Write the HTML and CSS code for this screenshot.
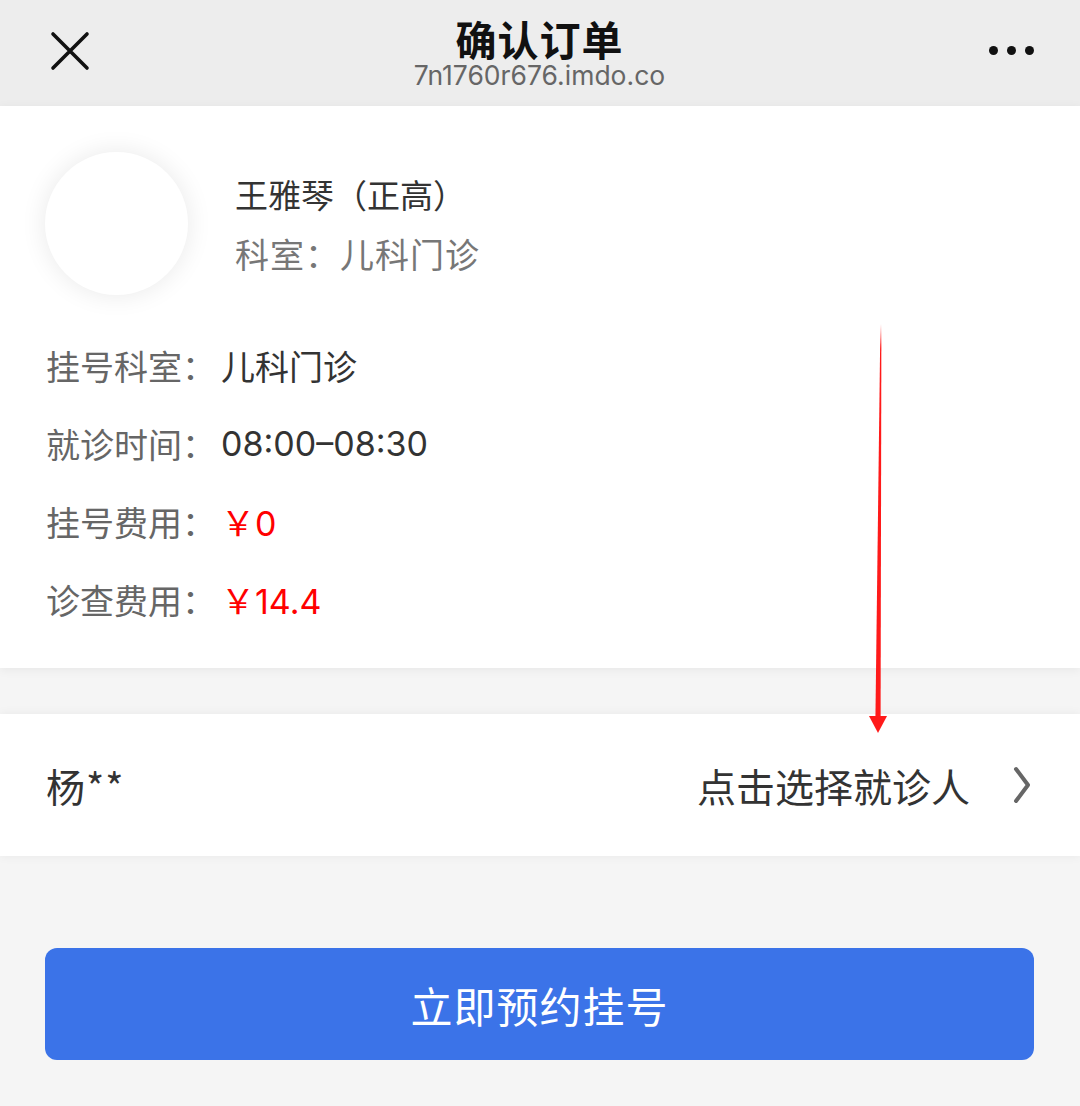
FILE: index.html
```html
<!DOCTYPE html>
<html lang="zh-CN">
<head>
<meta charset="utf-8">
<title>确认订单</title>
<link rel="stylesheet" href="styles.css">
</head>
<body>
<div class="page">
  <header class="topbar">
    <div class="close">
      <svg width="40" height="40" viewBox="0 0 40 40"><path d="M3 3 L37 37 M37 3 L3 37" stroke="#111" stroke-width="3.6" stroke-linecap="round" fill="none"/></svg>
    </div>
    <div class="titles">
      <div class="title">确认订单</div>
      <div class="subtitle">7n1760r676.imdo.co</div>
    </div>
    <div class="more">
      <span class="dot"></span><span class="dot"></span><span class="dot"></span>
    </div>
  </header>

  <section class="card">
    <div class="doctor">
      <div class="avatar"></div>
      <div class="doc-info">
        <div class="doc-name">王雅琴（正高）</div>
        <div class="doc-dept">科室：儿科门诊</div>
      </div>
    </div>
    <div class="rows">
      <div class="row"><span class="label">挂号科室：</span><span class="value">儿科门诊</span></div>
      <div class="row"><span class="label">就诊时间：</span><span class="value num">08:00–08:30</span></div>
      <div class="row"><span class="label">挂号费用：</span><span class="value red">￥<span class="num">0</span></span></div>
      <div class="row"><span class="label">诊查费用：</span><span class="value red">￥<span class="num">14.4</span></span></div>
    </div>
  </section>

  <section class="patient">
    <span class="pname">杨**</span>
    <span class="pick">点击选择就诊人
      <svg class="chev" width="20" height="38" viewBox="0 0 20 38"><path d="M4 3 L16 19 L4 35" stroke="#666" stroke-width="4" stroke-linecap="round" stroke-linejoin="round" fill="none"/></svg>
    </span>
  </section>

  <div class="action">
    <button class="btn">立即预约挂号</button>
  </div>

  <svg class="arrow" width="40" height="420" viewBox="0 0 40 420">
    <defs>
      <linearGradient id="fade" x1="0" y1="0" x2="0" y2="1">
        <stop offset="0" stop-color="#ff1a1a" stop-opacity="0"/>
        <stop offset="0.06" stop-color="#ff1a1a" stop-opacity="1"/>
        <stop offset="1" stop-color="#ff1a1a" stop-opacity="1"/>
      </linearGradient>
    </defs>
    <polygon points="20.4,0 21.4,0 20.6,396 15.4,396" fill="url(#fade)"/>
    <polygon points="9,392 27,392 18,409" fill="#ff1a1a"/>
  </svg>
</div>
</body>
</html>
```

FILE: styles.css
```css
* { box-sizing: border-box; }
html, body { margin: 0; padding: 0; }
body {
  background: #f5f5f5;
  font-family: "Noto Sans CJK SC", "Noto Sans", sans-serif;
  color: #333;
}
.page {
  position: relative;
  width: 1080px;
  height: 1106px;
  overflow: hidden;
  background: #f5f5f5;
}
.topbar {
  height: 106px;
  background: #ededed;
  display: flex;
  align-items: flex-start;
  justify-content: space-between;
  padding: 0 46px 0 50px;
}
.close { margin-top: 31px; width: 40px; height: 40px; }
.close svg { display: block; }
.titles {
  display: flex;
  flex-direction: column;
  align-items: center;
  padding-top: 16px;
}
.title {
  font-size: 41px;
  font-weight: 700;
  line-height: 44px;
  color: #111;
  letter-spacing: 1px;
}
.subtitle {
  font-family: "Inter", "Noto Sans", sans-serif;
  font-size: 26.5px;
  line-height: 26px;
  color: #666;
  margin-top: 2px;
}
.more {
  display: flex;
  gap: 9px;
  margin-top: 46px;
}
.dot {
  width: 9px; height: 9px;
  border-radius: 50%;
  background: #111;
}

.card {
  background: #fff;
  padding: 46px 0 30px 0;
  box-shadow: 0 2px 10px rgba(0,0,0,0.06);
  position: relative;
  z-index: 1;
}
.doctor {
  display: flex;
  align-items: center;
  padding-left: 45px;
}
.avatar {
  width: 143px;
  height: 143px;
  border-radius: 50%;
  background: #fff;
  box-shadow: 0 0 26px rgba(0,0,0,0.09);
}
.doc-info { margin-left: 47px; }
.doc-name {
  font-size: 33px;
  line-height: 60px;
  color: #333;
}
.doc-dept {
  font-size: 34px;
  line-height: 60px;
  color: #777;
  letter-spacing: 1px;
}
.rows {
  margin-top: 31px;
  padding-left: 46px;
}
.row {
  height: 78px;
  display: flex;
  align-items: center;
  font-size: 34px;
}
.label { color: #666; }
.value { color: #333; margin-left: 5px; }
.num { font-family: "Inter", "Noto Sans", sans-serif; font-size: 34px; }
.red { color: #ff0000; }

.patient {
  margin-top: 46px;
  height: 142px;
  background: #fff;
  display: flex;
  align-items: center;
  justify-content: space-between;
  padding: 0 48px 0 46px;
  box-shadow: 0 0 10px rgba(0,0,0,0.06);
  font-size: 39px;
  color: #333;
}
.pname { letter-spacing: 1px; }
.pick {
  display: flex;
  align-items: center;
}
.chev { margin-left: 42px; display: block; }

.action {
  padding: 92px 46px 0 45px;
}
.btn {
  width: 100%;
  height: 112px;
  border: none;
  border-radius: 12px;
  background: #3b73e8;
  color: #fff;
  font-family: "Noto Sans CJK SC", sans-serif;
  font-size: 42px;
  letter-spacing: 1px;
}

.arrow {
  position: absolute;
  left: 860px;
  top: 324px;
  z-index: 5;
}
```
